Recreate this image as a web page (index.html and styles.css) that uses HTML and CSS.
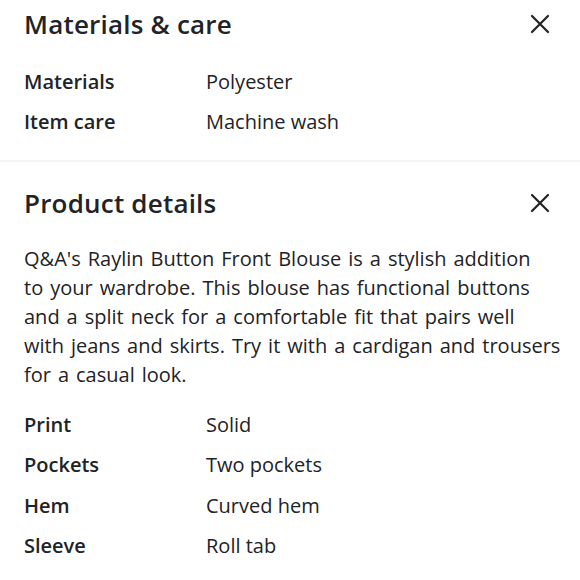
FILE: index.html
```html
<!DOCTYPE html>
<html>
<head>
<meta charset="utf-8">
<link rel="stylesheet" href="styles.css">
</head>
<body>
<section class="panel first">
  <div class="head">
    <h2 class="title">Materials &amp; care</h2>
    <svg class="close" viewBox="0 0 20 20" width="20" height="20"><path d="M2 2L18 18M18 2L2 18" stroke="#222" stroke-width="2.2" stroke-linecap="round"/></svg>
  </div>
  <dl class="specs">
    <div class="row"><dt>Materials</dt><dd>Polyester</dd></div>
    <div class="row"><dt>Item care</dt><dd>Machine wash</dd></div>
  </dl>
</section>
<hr class="sep">
<section class="panel second">
  <div class="head">
    <h2 class="title">Product details</h2>
    <svg class="close" viewBox="0 0 20 20" width="20" height="20"><path d="M2 2L18 18M18 2L2 18" stroke="#222" stroke-width="2.2" stroke-linecap="round"/></svg>
  </div>
  <p class="desc">Q&amp;A's Raylin Button Front Blouse is a stylish addition<br>to your wardrobe. This blouse has functional buttons<br>and a split neck for a comfortable fit that pairs well<br>with jeans and skirts. Try it with a cardigan and trousers<br>for a casual look.</p>
  <dl class="specs">
    <div class="row"><dt>Print</dt><dd>Solid</dd></div>
    <div class="row"><dt>Pockets</dt><dd>Two pockets</dd></div>
    <div class="row"><dt>Hem</dt><dd>Curved hem</dd></div>
    <div class="row"><dt>Sleeve</dt><dd>Roll tab</dd></div>
  </dl>
</section>
</body>
</html>
```
FILE: styles.css
```css
html, body {
  margin: 0;
  padding: 0;
  background: #fff;
}
body {
  font-family: "Open Sans", "Noto Sans", sans-serif;
  color: #222326;
  width: 580px;
  height: 580px;
  overflow: hidden;
}
.panel {
  padding: 0 30px 0 24px;
}
.head {
  display: flex;
  align-items: center;
  justify-content: space-between;
  height: 48px;
}
.second .head {
  margin-top: 17px;
}
.title {
  margin: 0;
  font-size: 26px;
  font-weight: 600;
  letter-spacing: 0.2px;
}
.close {
  display: block;
}
.specs {
  margin: 0;
  padding: 0;
}
.first .specs {
  margin-top: 13px;
}
.second .specs {
  margin-top: 15px;
}
.row {
  display: flex;
  height: 40.5px;
  align-items: center;
  font-size: 20px;
}
dt {
  width: 182px;
  font-weight: 600;
}
dd {
  margin: 0;
}
.sep {
  border: none;
  height: 2px;
  background: #f4f4f4;
  margin: 18px 0 0;
}
.desc {
  margin: 17px 0 0;
  font-size: 20px;
  line-height: 29px;
  word-spacing: 1.8px;
  white-space: nowrap;
}
```
